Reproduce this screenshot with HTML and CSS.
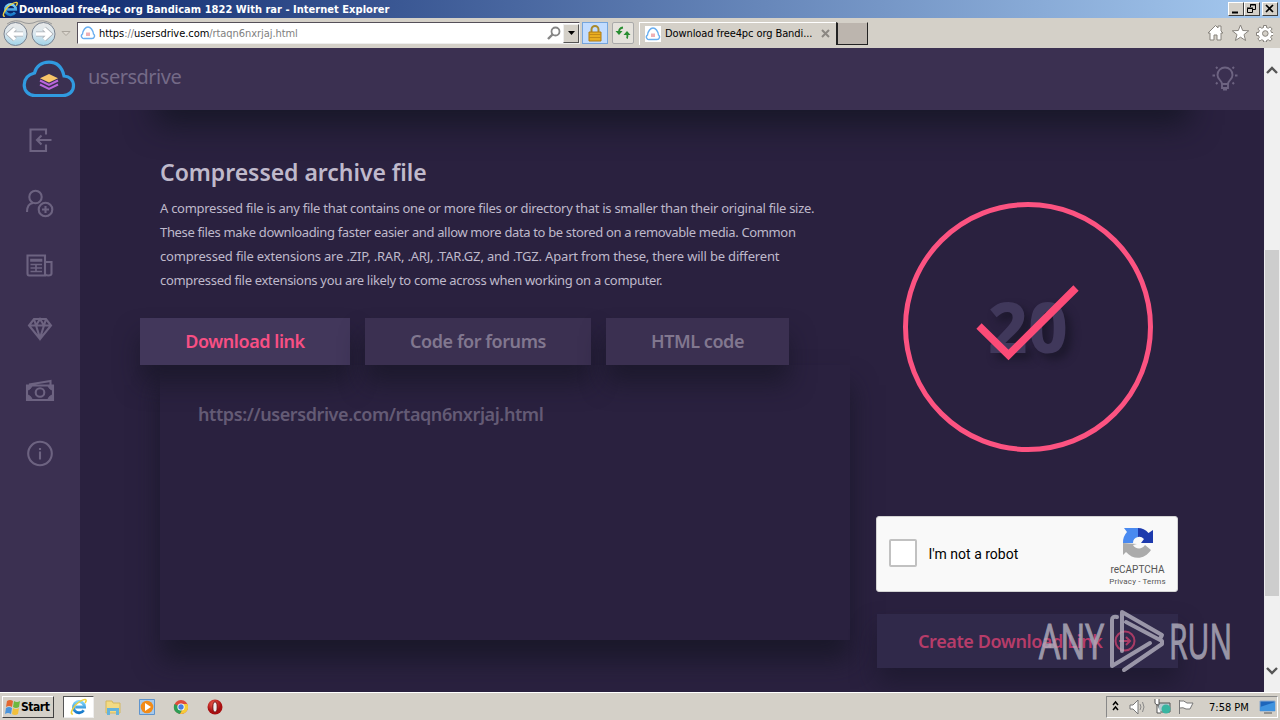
FILE: index.html
```html
<!DOCTYPE html>
<html lang="en">
<head>
<meta charset="utf-8">
<title>usersdrive</title>
<link rel="stylesheet" href="styles.css">
</head>
<body>
<div class="desktop">
<svg width="0" height="0" class="defs"><defs>
<linearGradient id="tg" x1="0" y1="0" x2="0" y2="1"><stop offset="0" stop-color="#e8e8e8"/><stop offset=".5" stop-color="#dbe8ef"/><stop offset="1" stop-color="#9fd2e8"/></linearGradient>
<linearGradient id="ieg" x1="0" y1="0" x2="0" y2="1"><stop offset="0" stop-color="#7fd4fa"/><stop offset="1" stop-color="#1477c9"/></linearGradient>
<radialGradient id="red" cx=".4" cy=".3"><stop offset="0" stop-color="#f06050"/><stop offset="1" stop-color="#a80e10"/></radialGradient>
<symbol id="ie" viewBox="0 0 18 18"><path d="M13.7 12.2A5.6 5.6 0 1 1 14.6 9H5.2" fill="none" stroke="url(#ieg)" stroke-width="2.8"/><path d="M3 16C-1 17 3 8 9 4s9-3 6 1" fill="none" stroke="#eed13d" stroke-width="1.5"/></symbol>
<symbol id="fav" viewBox="0 0 16 16"><path d="M4.500 13.500h7.500a2.500 2.500 0 0 0 1.500-4.500C13 5 10.500 2 8 2S3 5 2.500 9A2.500 2.500 0 0 0 4.500 13.500z" fill="#fff" stroke="#68aef0" stroke-width="1.400"/><path d="M6 7.500h4v3.500H6z" fill="#eeb0b5"/></symbol>
</defs></svg>
<header class="titlebar">
  <svg class="ie-small" width="17" height="17"><use href="#ie"/></svg>
  <span class="window-title">Download free4pc org Bandicam 1822 With rar - Internet Explorer</span>
  <div class="window-buttons">
    <span class="wb"><svg width="14" height="12"><path d="M3 9.500h6" stroke="#000" stroke-width="2"/></svg></span>
    <span class="wb"><svg width="14" height="12"><path d="M5.500 4V1.500h5v5H8M5 2h6M2.500 5.500h5v4h-5zM2 5h6" fill="none" stroke="#000"/></svg></span>
    <span class="wb close"><svg width="14" height="12"><path d="M3 2l7 7M10 2l-7 7" stroke="#000" stroke-width="1.700"/></svg></span>
  </div>
</header>
<nav class="toolbar">
  <svg class="navs" width="76" height="29" viewBox="0 0 76 29">
    <path d="M7 5Q15-1 25 4q4 1 8 0 10-5 19 1" fill="none" stroke="#999" />
    <circle cx="15.500" cy="15" r="11.500" fill="url(#tg)" stroke="#788290"/><circle cx="43.500" cy="15" r="11.500" fill="url(#tg)" stroke="#788290"/>
    <path d="M23 15H10M15 9.500L9 15l6 5.500M36 15h13M44 9.500l6 5.500-6 5.500" fill="none" stroke="#aaaeb4" stroke-width="5"/>
    <path d="M23 15H10M15 9.500L9 15l6 5.500M36 15h13M44 9.500l6 5.500-6 5.500" fill="none" stroke="#fff" stroke-width="3.400"/>
    <path d="M62 12.500h8l-4 4z" fill="#ddd8d0" stroke="#aaa59d"/>
  </svg>
  <div class="address">
    <svg width="16" height="16"><use href="#fav"/></svg>
    <span class="url"><b>https</b>://<b>usersdrive.com</b>/rtaqn6nxrjaj.html</span>
    <svg class="search" width="14" height="14"><circle cx="8.500" cy="5.500" r="4" fill="none" stroke="#858585" stroke-width="1.800"/><path d="M5.500 8.500L1 13" stroke="#858585" stroke-width="2.400"/></svg>
    <span class="drop"><svg width="7" height="4"><path d="M0 0h7L3.500 4z"/></svg></span>
  </div>
  <span class="lock"><svg width="14" height="17"><path d="M3.500 8V4.500a3.500 3.500 0 0 1 7 0V8" fill="none" stroke="#a98a2c" stroke-width="2"/><path d="M1 7h12v9H1z" fill="#e9ae20" stroke="#b07a12"/><path d="M1 9.500h12M1 12.500h12" stroke="#c48b17"/></svg></span>
  <span class="refresh"><svg width="16" height="14"><path d="M8 1.500Q4 2 4 6M12 12.500q1-2 0-5" fill="none" stroke="#288d31" stroke-width="1.800"/><path d="M.5 5h7L4 9zM8.500 9h7L12 5z" fill="#288d31"/></svg></span>
  <div class="tab"><svg width="16" height="16"><use href="#fav"/></svg><span class="tab-title">Download free4pc org Bandi...</span><svg width="9" height="9"><path d="M1 1l7 7M8 1L1 8" stroke="#8b8782" stroke-width="2"/></svg></div>
  <span class="newtab"></span>
  <svg class="tools" width="66" height="18" fill="#fff" stroke="#87837d"><path d="M1 9L8.500 1.500 11 4V2h3v5l2 2h-2v7h-4v-5H7v5H3V9z"/><path d="M33.500 1l2.200 5.500 6 .3-4.700 3.800 1.600 5.900-5.100-3.300-5.100 3.300L30 10.600l-4.700-3.800 6-.3z"/><path d="M56.500 1.500h3v2l2 .8 1.500-1.500 2.200 2.200-1.500 1.500.8 2h2v3h-2l-.8 2 1.500 1.500-2.200 2.200-1.500-1.500-2 .8v1.500h-3v-1.500l-2-.8-1.500 1.500-2.200-2.200 1.500-1.500-.8-2h-2v-3h2l.8-2-1.500-1.500 2.200-2.200 1.500 1.500 2-.8z"/><circle cx="58.300" cy="9.500" r="2.800" fill="#d4d0c8"/></svg>
</nav>
<div class="browser">
<div class="site">
  <div class="site-head">
    <svg class="logo" width="54" height="38" viewBox="0 0 54 38"><path d="M13 35.500h28c6 0 10.500-4 10.500-9.500 0-6-4-9.500-9.500-10C40 7 35 2.200 27 2.200S14 7 12.500 13C6.500 14.500 2.200 18 2.200 25c0 6 4.500 10.500 10.800 10.500z" fill="none" stroke="#309ae0" stroke-width="3.200"/><path d="M27 14l9 4.200-9 4.300-9-4.300z" fill="#f7c469"/><path d="M18 20.500l9 4.300 9-4.300M18 24.500l9 4.300 9-4.300" fill="none" stroke="#ba65dc" stroke-width="2"/></svg>
    <span class="brand">usersdrive</span>
    <svg class="bulb" width="26" height="26" viewBox="0 0 26 26" fill="none" stroke="#6d6381" stroke-width="1.900"><path d="M10 18c0-4-4.500-4-4.500-9a7.500 7.500 0 0 1 15 0c0 5-4.500 5-4.500 9zM10 18v4h6v-4M11 23.500h4"/><path d="M.5 9.500h2.500M23 9.500h2.500M4 1l1.500 1.500M20.500 2.500L22 1M4 18l1.500-1.500M20.500 16.500L22 18" stroke-width="2"/></svg>
  </div>
  <div class="site-body">
    <aside class="side">
      <svg viewBox="0 0 30 30"><path d="M20.500 10V5H5v21.500h15.500V20M26 15.500H12M16 11l-4.500 4.500L16 20" transform="translate(.5 -.5)"/></svg>
      <svg viewBox="0 0 30 30"><circle cx="10.500" cy="9" r="6.200"/><path d="M2 24c0-5 2-8.500 6-9"/><circle cx="20.500" cy="21.500" r="6.800"/><path d="M17 21.500h7M20.500 18v7"/></svg>
      <svg viewBox="0 0 30 30"><path d="M20 25.500H4q-1.500 0-1.500-2v-18h17.500v20zM20 12h6.500v11.500q0 2-3.200 2-3.300 0-3.300-2"/><path d="M6 9.500h10.500v1.500H6zM5.500 14.500H17M5.500 18H17M5.500 21.500H17M11 14V22" stroke-width="1.700"/></svg>
      <svg viewBox="0 0 30 30"><path d="M9 6h12l5 6.500L15 26 4 12.500zM4 12.500h22M9 6l2 6.500L15 25l4-12.500L21 6M11 12.500L15 6l4 6.500"/></svg>
      <svg viewBox="0 0 30 30"><path d="M2 10.500h26v14.500H2zM4 9.500L25.500 6v4"/><path d="M3 11h4q-1 3-4 4zM27 11h-4q1 3 4 4zM3 24h4q-1-3-4-4zM27 24h-4q1-3 4-4z" fill="#6d6381" stroke-width="1"/><circle cx="15" cy="17.500" r="4.300"/></svg>
      <svg viewBox="0 0 30 30"><circle cx="15" cy="15.500" r="11.800"/><path d="M15 10v2M15 13.500v8"/></svg>
    </aside>
    <main class="main">
      <div class="top-shade"></div>
      <section class="left">
        <h1>Compressed archive file</h1>
        <p class="desc"><span class="l1">A compressed file is any file that contains one or more files or directory that is smaller than their original file size.</span><span class="l2">These files make downloading faster easier and allow more data to be stored on a removable media. Common</span><span class="l3">compressed file extensions are .ZIP, .RAR, .ARJ, .TAR.GZ, and .TGZ. Apart from these, there will be different</span><span class="l4">compressed file extensions you are likely to come across when working on a computer.</span></p>
        <div class="link-box">
          <div class="tabs"><span class="t1">Download link</span><span class="t2">Code for forums</span><span class="t3">HTML code</span></div>
          <div class="panel"><span class="link">https://usersdrive.com/rtaqn6nxrjaj.html</span></div>
        </div>
      </section>
      <section class="right">
        <div class="timer"><span class="count">20</span><svg class="check" width="110" height="84"><path d="M7 44l29.500 29L104 6" fill="none" stroke="#fc4b77" stroke-width="7.500"/></svg></div>
        <div class="captcha">
          <span class="box"></span><span class="robot">I'm not a robot</span>
          <div class="rc"><svg width="32" height="32" viewBox="0 0 32 32"><path d="M1 16A15 15 0 0 1 5 5L2 1h14v9q-5 1-5 6z" fill="#4a8af0"/><path d="M16 1q6 0 10.500 5L31 3v13H19l3-4q-3-3-6-2z" fill="#1d3aad"/><path d="M1 16v12l3-3c8 9 19 7 25-2l-6-5c-3 5-10 4-12 0l4-1z" fill="#ababab"/></svg><span class="rn">reCAPTCHA</span><span class="pt">Privacy - Terms</span></div>
        </div>
        <div class="create"><span>Create Download Link</span><svg width="22" height="22" fill="none" stroke="#a93b65" stroke-width="2"><circle cx="11" cy="11" r="9.500"/><path d="M5 11h11M12 7l4 4-4 4"/></svg></div>
      </section>
    </main>
  </div>
</div>
<div class="scroll"><svg width="12" height="8"><path d="M1 7l5-5 5 5" /></svg><span class="thumb"></span><svg width="12" height="8"><path d="M1 1l5 5 5-5"/></svg></div>
</div>
<footer class="taskbar">
  <span class="start"><svg width="16" height="16" viewBox="0 0 16 16"><path d="M2 2q3-2 6 0L7 8Q4 6 1 8z" fill="#e36730"/><path d="M9 2q3 2 6 0l-1 6q-3 2-6 0z" fill="#6eb83f"/><path d="M1 9q3-2 6 0l-1 6Q3 13 0 15z" fill="#4a94dc"/><path d="M8 9q3 2 6 0l-1 6q-3 2-6 0z" fill="#f2c03b"/></svg><b>Start</b></span>
  <span class="active"><svg width="18" height="18"><use href="#ie"/></svg></span>
  <svg class="ti" width="18" height="18"><path d="M2 3h6l1 2h7v10H2z" fill="#f3da83" stroke="#d4b75e"/><path d="M3 17v-7h12v7h-3v-4H6v4z" fill="#65b3db"/></svg>
  <svg class="ti" width="18" height="18"><path d="M1.500 1.500h15v15h-15z" fill="#a6c9ec" stroke="#5f94cd"/><circle cx="9" cy="9" r="6.300" fill="#f28b18"/><path d="M7 5l6 4-6 4z" fill="#fff"/></svg>
  <svg class="ti" width="18" height="18"><circle cx="9" cy="9" r="7" fill="#de4b3b"/><path d="M2.500 6A7 7 0 0 0 8 16l3-6z" fill="#2d9d55"/><path d="M9 6h6.300A7 7 0 0 1 8 16l4-7z" fill="#f6cc37"/><circle cx="9" cy="9" r="3.600" fill="#fff"/><circle cx="9" cy="9" r="2.700" fill="#477de0"/></svg>
  <svg class="ti" width="18" height="18"><circle cx="9" cy="9" r="7.500" fill="url(#red)"/><ellipse cx="9" cy="9" rx="2.200" ry="5.200" fill="#eee" stroke="#761010"/></svg>
  <div class="tray">
    <svg width="84" height="20" viewBox="0 0 84 20"><path d="M3 8l2.500-3L8 8M3 13l2.500-3L8 13" fill="none" stroke="#000" stroke-width="1.500"/><path d="M20 8h3l5-5v14l-5-5h-3z" fill="#fff" stroke="#777"/><path d="M30 7q2 3 0 6M32.500 5q3 5 0 10" fill="none" stroke="#888"/><path d="M48 6h12v9H48z" fill="#b7c9cf" stroke="#555"/><path d="M45 2v4q0 2 4 2V2M47 8v8h4" fill="#fff" stroke="#555"/><circle cx="56" cy="12" r="4.500" fill="#39b5a1"/><path d="M69.500 3v14M70 4q4-1 7 2h6l-3 6h-4q-3-2-6-1" fill="#fff" stroke="#777"/></svg>
    <span class="clock">7:58 PM</span>
    <svg width="18" height="16"><path d="M1 2h15v10H1z" fill="#1d65bb" stroke="#8ba9cd"/><path d="M1 8l15-5v9H1z" fill="#3f93df"/><path d="M5 14h8" stroke="#555"/></svg>
  </div>
</footer>
<svg class="watermark" width="210" height="80" viewBox="0 0 210 80">
  <g fill="#b5b2c0" stroke="#b5b2c0" stroke-width="1.200"><text x="4" y="57" font-size="50" textLength="65" lengthAdjust="spacingAndGlyphs">ANY</text><text x="134" y="57" font-size="50" textLength="63" lengthAdjust="spacingAndGlyphs">RUN</text></g>
  <path d="M82 15q-5-1-5 3v46l38-23M87 49V10l40 23-2 4M89 68l38-26v-3L91 20" fill="none" stroke="#b5b2c0" stroke-width="4" stroke-linejoin="round" stroke-linecap="round"/>
</svg>
</div>
</body>
</html>
```
FILE: styles.css
```css
* { box-sizing: border-box; }
body { margin: 0; font-family: "DejaVu Sans Condensed", "DejaVu Sans", sans-serif; font-size: 11px; }
svg { display: block; flex: none; }
.defs { position: absolute; }
.desktop { width: 1280px; height: 720px; position: relative; overflow: hidden; display: flex; flex-direction: column; white-space: nowrap; }
.titlebar { height: 18px; display: flex; align-items: center; background: linear-gradient(90deg, #0a246a, #a6caf0); color: #fff; padding: 0 2px 0 2px; }
.window-title { font-weight: bold; letter-spacing: .03px; flex: 1; }
.window-buttons { display: flex; }
.wb { width: 16px; height: 14px; background: #d4d0c8; border: 1px solid; border-color: #fff #404040 #404040 #fff; }
.close { margin-left: 2px; }
.toolbar { height: 30px; background: #d4d0c8; display: flex; align-items: center; }
.address { width: 503px; height: 22px; margin-left: 1px; background: #fff; border: 1px solid #554f59; border-right-color: #eee; border-bottom-color: #eee; display: flex; align-items: center; padding-left: 2px; }
.url { flex: 1; color: #808080; margin-left: 3px; letter-spacing: -.06px; }
.url b { font-weight: normal; color: #000; }
.drop { width: 16px; height: 19px; margin-left: 2px; background: #d4d0c8; border: 1px solid; border-color: #eee #555 #555 #eee; display: grid; place-items: center; }
.lock { width: 26px; height: 22px; margin-left: 2px; background: #c2dcff; border: 1px solid #76a5dc; display: grid; place-items: center; }
.refresh { width: 22px; height: 22px; margin-left: 4px; background: #e5e2dc; border: 1px solid #aaa; border-radius: 2px; display: grid; place-items: center; }
.tab { width: 197px; height: 23px; margin-left: 5px; border-top: 1px solid #fff; border-left: 1px solid #fff; display: flex; align-items: center; padding: 0 6px 0 5px; }
.tab svg:first-child { background: #fff; }
.tab-title { margin-left: 4px; flex: 1; letter-spacing: -.09px; }
.newtab { width: 32px; height: 23px; background: #bcb5ae; border: 1px solid #222; border-top-color: #d4d0c8; border-width: 1px 1px 1px 2px; }
.tools { margin-left: auto; margin-right: 7px; }
.browser { display: flex; height: 644px; }
.site { width: 1264px; display: flex; flex-direction: column; background: #2a213f; font-family: "Noto Sans", "Open Sans", sans-serif; }
.site-head { height: 62px; background: #3b3051; display: flex; align-items: center; padding-left: 22px; flex: none; }
.brand { font-size: 20px; color: #746a87; margin: -5px 0 0 12px; letter-spacing: -.5px; }
.bulb { margin: 0 26px 0 auto; }
.site-body { display: flex; flex: 1; }
.side { width: 80px; background: #3b3051; display: flex; flex-direction: column; align-items: center; gap: 32.600px; padding-top: 15px; }
.side svg { width: 30px; height: 30px; fill: none; stroke: #6d6381; stroke-width: 2.100; }
.main { width: 1184px; display: flex; align-items: flex-start; padding-left: 80px; position: relative; overflow: hidden; }
.top-shade { position: absolute; left: 80px; top: -40px; width: 1024px; height: 40px; box-shadow: 0 10px 30px 5px rgba(18,20,32,.75); }
.left { width: 690px; flex: none; padding-top: 46px; }
h1 { margin: 0; font-size: 23px; line-height: 32px; font-weight: 600; color: #bfb9cb; letter-spacing: -.04px; }
.desc { margin: 8px 0 0; font-size: 13px; line-height: 24px; color: #bfb9cb; display: flex; flex-direction: column; align-items: flex-start; }
.l1 { letter-spacing: -.28px; }
.l2 { letter-spacing: -.35px; }
.l3 { letter-spacing: -.18px; }
.l4 { letter-spacing: -.315px; }
.tabs { display: flex; gap: 15px; margin: 26px 0 0 -20px; position: relative; z-index: 1; }
.tabs span { height: 47px; display: grid; place-items: center; background: #3b3051; color: #81778f; font-size: 18px; font-weight: 600; letter-spacing: -.45px; padding-bottom: 1px; box-shadow: 0 18px 25px rgba(20,20,34,.6); }
.tabs .t1 { width: 210px; background: #42375b; color: #f84f84; }
.tabs .t2 { width: 226px; }
.tabs .t3 { width: 183px; }
.panel { height: 275px; background: #2a213f; padding: 37px 0 0 38px; box-shadow: 0 20px 24px rgba(22,22,36,.75); }
.link { font-size: 18px; font-weight: 600; line-height: 24px; color: #645b75; letter-spacing: -.42px; }
.right { width: 302px; margin-left: 26px; padding-top: 92px; }
.timer { width: 250px; height: 250px; border: 5px solid #fc5381; border-radius: 50%; margin-left: 27px; display: grid; place-items: center; position: relative; }
.count { font-size: 69px; font-weight: 800; line-height: 90px; margin-top: -2px; color: #40385b; text-shadow: 6px 6px 8px #1c182c; }
.check { position: absolute; left: 64px; top: 75px; }
.captcha { height: 76px; margin-top: 64px; border-radius: 3px; background: #f9f9f9; border: 1px solid #d3d3d3; display: flex; align-items: center; padding-left: 12px; font-family: Roboto, sans-serif; }
.box { width: 28px; height: 28px; margin-top: -2px; border: 2px solid #c1c1c1; border-radius: 2px; background: #fff; }
.robot { font-size: 14px; color: #000; margin-left: 11.500px; flex: 1; }
.rc { width: 79px; display: flex; flex-direction: column; align-items: center; color: #555; padding-top: 5px; }
.rn { font-size: 10px; line-height: 12px; margin-top: 5px; }
.pt { font-size: 8px; line-height: 11px; letter-spacing: .15px; }
.create { height: 54px; margin: 22px 0 0 1px; background: #30294a; box-shadow: 0 15px 25px rgba(24,22,40,.6); display: flex; align-items: center; padding: 0 0 0 41px; color: #b63c69; font-size: 18px; font-weight: 600; letter-spacing: -.4px; }
.create span { width: 186px; }
.create svg { margin-left: 10px; }
.scroll { width: 16px; background: #f0f0f0; display: flex; flex-direction: column; align-items: center; padding: 18px 0 17px; }
.scroll path { fill: none; stroke: #555; stroke-width: 2.400; }
.thumb { width: 14px; height: 346px; margin: 176px 0 auto; background: #cdcdcd; }
.taskbar { height: 28px; background: #d4d0c8; border-top: 1px solid #fff; display: flex; align-items: center; padding: 1px 2px 0; }
.start { width: 52px; height: 22px; border: 1px solid; border-color: #fff #404040 #404040 #fff; display: flex; align-items: center; padding-left: 2px; }
.start b { font-size: 12px; letter-spacing: -.45px; margin-left: 0; }
.active { width: 31px; height: 22px; margin: 0 1px 0 9px; background: #fff; border: 1px solid #555; border-right-color: #eee; border-bottom-color: #eee; display: grid; place-items: center; }
.ti { margin-left: 16px; }
.ti:first-of-type { margin-left: 9px; }
.tray { margin-left: auto; width: 172px; height: 22px; border: 1px solid #888; border-right-color: #fff; border-bottom-color: #fff; display: flex; align-items: center; padding-left: 3px; }
.clock { margin-left: 15px; flex: 1; }
.watermark { position: absolute; left: 1035px; top: 602px; opacity: .8; font-family: "Open Sans", "Liberation Sans", sans-serif; }
```
